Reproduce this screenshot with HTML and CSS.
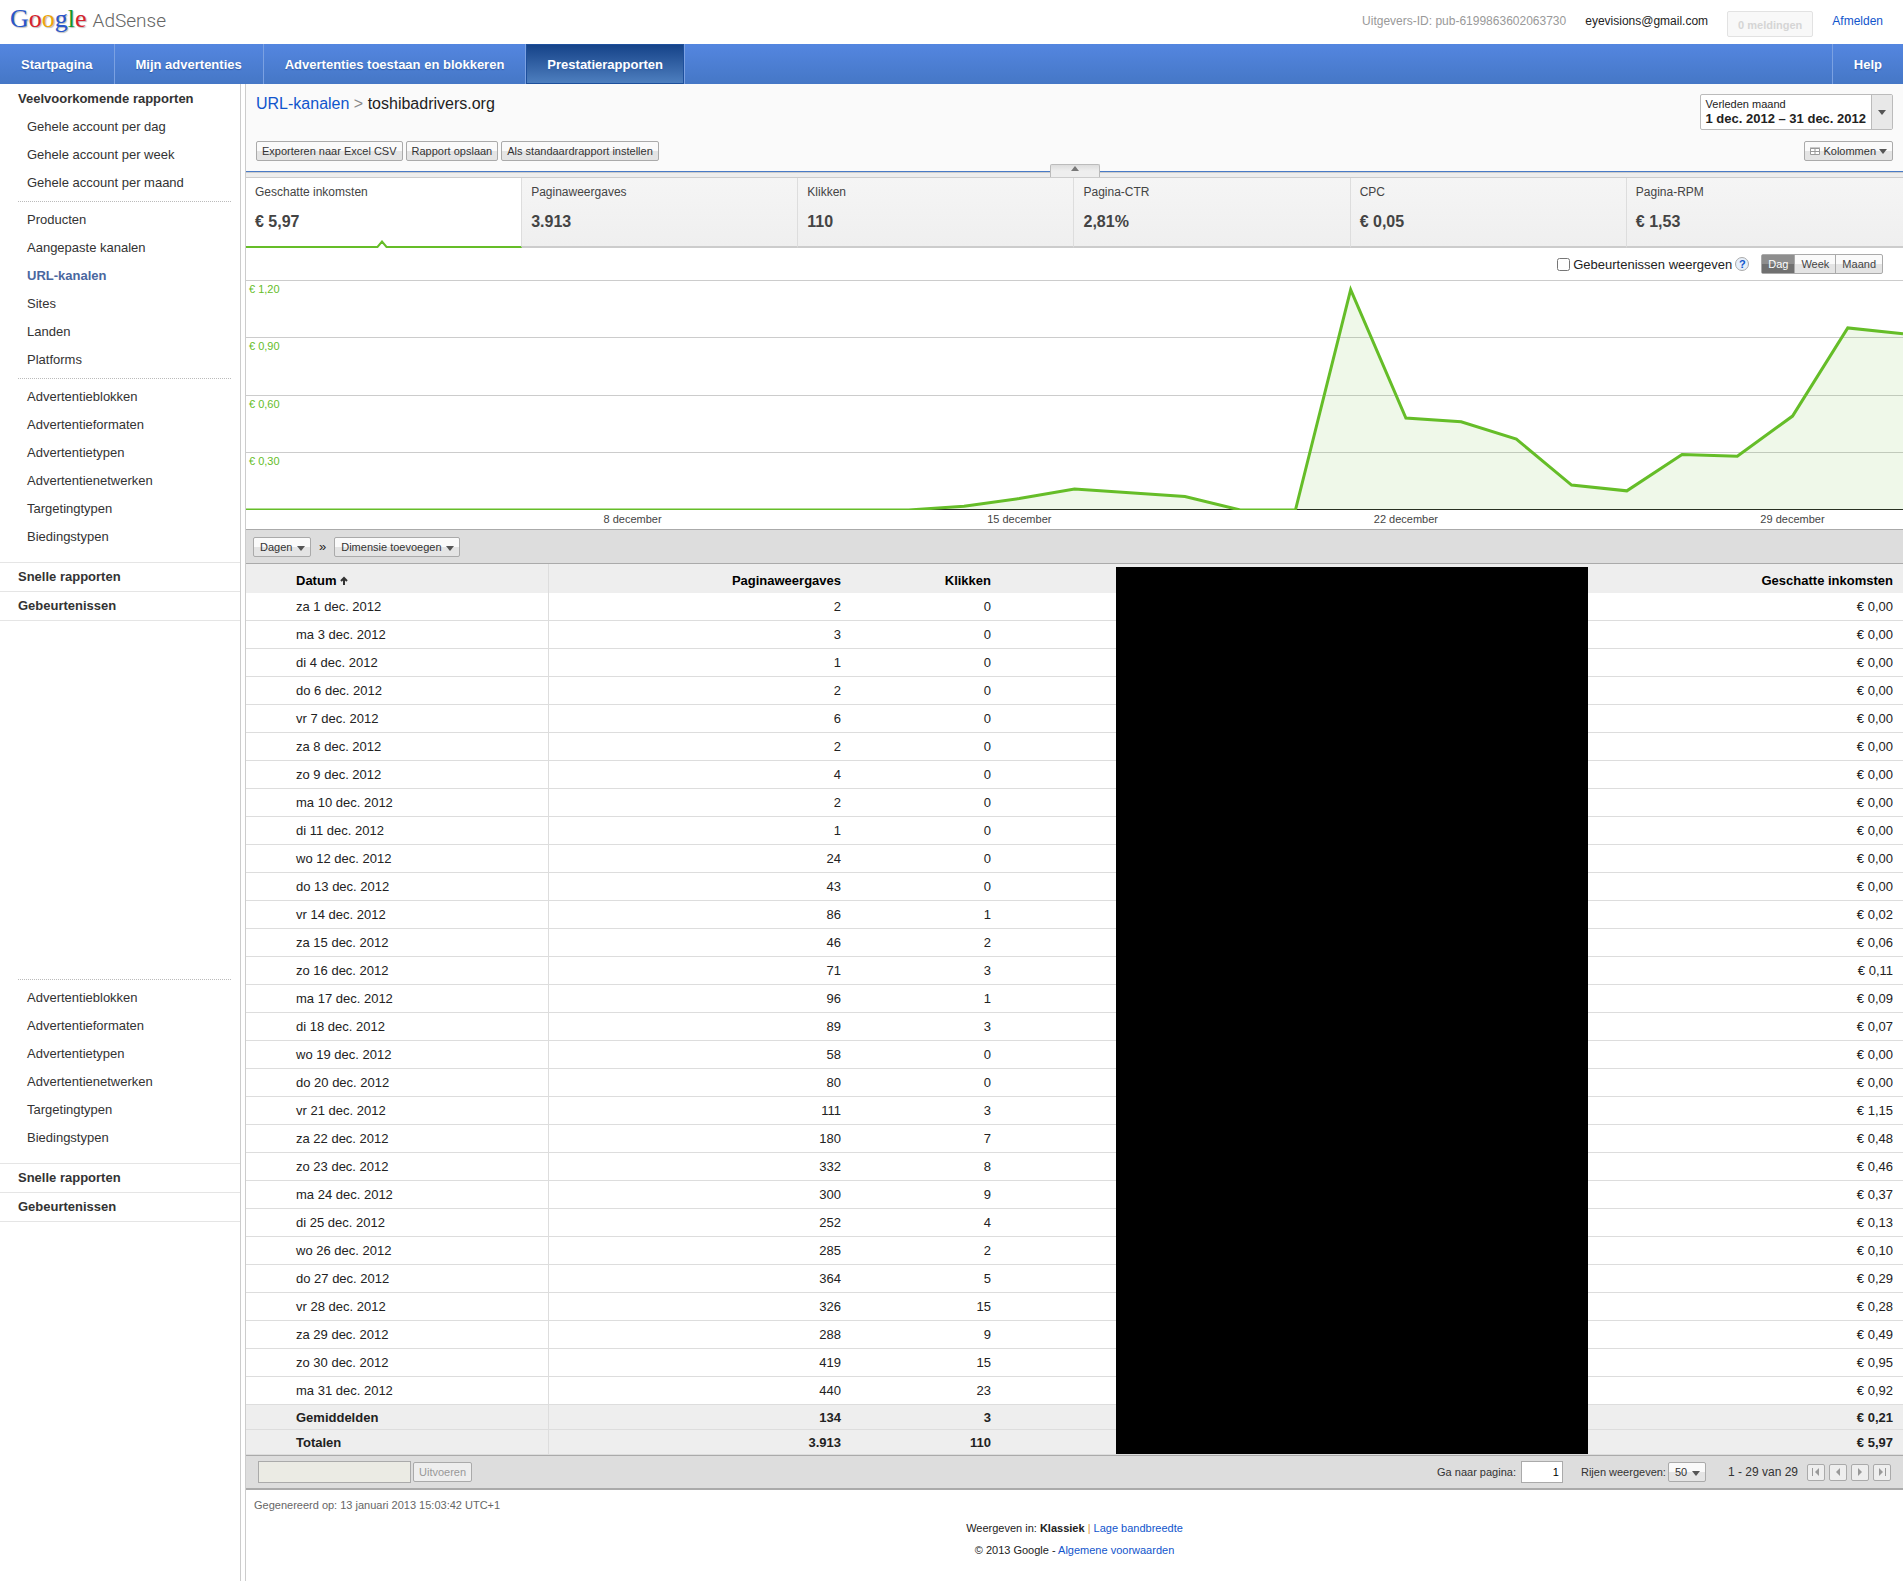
FILE: index.html
```html
<!DOCTYPE html>
<html lang="nl">

<head>
    <meta charset="UTF-8">
    <meta name="viewport" content="width=device-width, initial-scale=1.0">
    <title>Google AdSense - Prestatierapporten</title>
    <link rel="stylesheet" href="styles.css">
</head>

<body>
    <header class="topbar">
        <a href="#" class="logo">
            <span class="google"><span class="blue">G</span><span class="red">o</span><span class="yellow">o</span><span class="blue">g</span><span class="green">l</span><span class="red">e</span></span>
            <span class="adsense">AdSense</span>
        </a>
        <div class="account">
            <span class="publisher">Uitgevers-ID: pub-6199863602063730</span>
            <span>eyevisions@gmail.com</span>
            <button type="button" class="alerts" disabled>0 meldingen</button>
            <a href="#">Afmelden</a>
        </div>
    </header>

    <nav class="tabs">
        <a href="#">Startpagina</a>
        <a href="#">Mijn advertenties</a>
        <a href="#">Advertenties toestaan en blokkeren</a>
        <a href="#" class="active">Prestatierapporten</a>
        <a href="#" class="help">Help</a>
    </nav>

    <div class="layout">
        <aside class="sidebar">
            <h2>Veelvoorkomende rapporten</h2>
            <ul>
                <li><a href="#">Gehele account per dag</a></li>
                <li><a href="#">Gehele account per week</a></li>
                <li><a href="#">Gehele account per maand</a></li>
            </ul>
            <ul class="divided">
                <li><a href="#">Producten</a></li>
                <li><a href="#">Aangepaste kanalen</a></li>
                <li><a href="#" class="current">URL-kanalen</a></li>
                <li><a href="#">Sites</a></li>
                <li><a href="#">Landen</a></li>
                <li><a href="#">Platforms</a></li>
            </ul>
            <ul class="divided">
                <li><a href="#">Advertentieblokken</a></li>
                <li><a href="#">Advertentieformaten</a></li>
                <li><a href="#">Advertentietypen</a></li>
                <li><a href="#">Advertentienetwerken</a></li>
                <li><a href="#">Targetingtypen</a></li>
                <li><a href="#">Biedingstypen</a></li>
            </ul>
            <div class="sections">
                <a href="#">Snelle rapporten</a>
                <a href="#">Gebeurtenissen</a>
            </div>

            <ul class="divided repeat">
                <li><a href="#">Advertentieblokken</a></li>
                <li><a href="#">Advertentieformaten</a></li>
                <li><a href="#">Advertentietypen</a></li>
                <li><a href="#">Advertentienetwerken</a></li>
                <li><a href="#">Targetingtypen</a></li>
                <li><a href="#">Biedingstypen</a></li>
            </ul>
            <div class="sections">
                <a href="#">Snelle rapporten</a>
                <a href="#">Gebeurtenissen</a>
            </div>
        </aside>

        <main class="main">
            <div class="report-head">
                <div class="head-row">
                    <h1><a href="#">URL-kanalen</a> <span class="sep">&gt;</span> toshibadrivers.org</h1>
                    <button type="button" class="daterange">
                        <span class="range-text">Verleden maand<strong>1 dec. 2012 – 31 dec. 2012</strong></span>
                        <span class="range-arrow"><span class="caret"></span></span>
                    </button>
                </div>
                <div class="head-row">
                    <div class="actions">
                        <button type="button" class="btn">Exporteren naar Excel CSV</button>
                        <button type="button" class="btn">Rapport opslaan</button>
                        <button type="button" class="btn">Als standaardrapport instellen</button>
                    </div>
                    <button type="button" class="btn columns">
                        <svg width="10" height="8" viewBox="0 0 10 8" fill="#fff" stroke="#999"><path d="M.5 1.500h9v6h-9zM.5 4.500h9M5 1v6"/><path d="M0 1h10"/></svg>
                        Kolommen
                        <span class="caret"></span>
                    </button>
                </div>
            </div>

            <div class="collapse">
                <button type="button" class="collapse-tab" aria-label="Grafiek verbergen">
                    <svg width="8" height="5" viewBox="0 0 8 5"><path d="M4 0L8 5H0z" fill="#777"/></svg>
                </button>
            </div>

            <div class="metrics">
                <button type="button" class="metric selected">
                    Geschatte inkomsten<strong>€ 5,97</strong>
                    <svg class="notch" width="12" height="8" viewBox="0 0 12 8"><path d="M1 7L6 1.500L11 7V8H1z" fill="#fff"/><path d="M0 7H1.500L6 1.500L10.500 7H12" fill="none" stroke="#65bd28" stroke-width="2"/></svg>
                </button>
                <button type="button" class="metric">Paginaweergaves<strong>3.913</strong></button>
                <button type="button" class="metric">Klikken<strong>110</strong></button>
                <button type="button" class="metric">Pagina-CTR<strong>2,81%</strong></button>
                <button type="button" class="metric">CPC<strong>€ 0,05</strong></button>
                <button type="button" class="metric">Pagina-RPM<strong>€ 1,53</strong></button>
            </div>

            <div class="chart-tools">
                <input type="checkbox" id="events">
                <label for="events">Gebeurtenissen weergeven</label>
                <a href="#" class="question" aria-label="Uitleg">?</a>
                <div class="segmented">
                    <button type="button" class="on">Dag</button>
                    <button type="button">Week</button>
                    <button type="button">Maand</button>
                </div>
            </div>

            <div class="chart">
                <div class="gridline">€ 1,20</div>
                <div class="gridline">€ 0,90</div>
                <div class="gridline">€ 0,60</div>
                <div class="gridline">€ 0,30</div>
                <!-- one unit wide per day, one unit high per eurocent -->
                <svg class="plot" viewBox="0 0 30 120" preserveAspectRatio="none">
                    <path class="area" d="M0 120H12L13 118L14 114L15 109L16 111L17 113L18 120H19L20 5L21 72L22 74L23 83L24 107L25 110L26 91L27 92L28 71L29 25L30 28V120z"/>
                    <path class="line" d="M0 120H12L13 118L14 114L15 109L16 111L17 113L18 120H19L20 5L21 72L22 74L23 83L24 107L25 110L26 91L27 92L28 71L29 25L30 28"/>
                </svg>
            </div>
            <div class="axis">
                <span style="left: 23.33%">8 december</span>
                <span style="left: 46.67%">15 december</span>
                <span style="left: 70%">22 december</span>
                <span style="left: 93.33%">29 december</span>
            </div>

            <div class="dimensions">
                <span class="dropdown">
                    <select aria-label="Dimensie">
                        <option>Dagen</option>
                    </select>
                    <span class="caret"></span>
                </span>
                <span class="raquo">»</span>
                <span class="dropdown">
                    <select aria-label="Dimensie toevoegen">
                        <option>Dimensie toevoegen</option>
                    </select>
                    <span class="caret"></span>
                </span>
            </div>

            <div class="table-wrap">
                <table class="report">
                    <colgroup>
                        <col class="col-date">
                        <col class="col-views">
                        <col class="col-clicks">
                        <col>
                        <col class="col-income">
                    </colgroup>
                    <thead>
                        <tr>
                            <th>Datum <svg width="8" height="9" viewBox="0 0 8 9" fill="none" stroke="#333" stroke-width="2"><path d="M4 9V2M1 5L4 2L7 5"/></svg></th>
                            <th>Paginaweergaves</th>
                            <th>Klikken</th>
                            <td></td>
                            <th>Geschatte inkomsten</th>
                        </tr>
                    </thead>
                    <tbody>
                        <tr><td>za 1 dec. 2012</td><td>2</td><td>0</td><td></td><td>€ 0,00</td></tr>
                        <tr><td>ma 3 dec. 2012</td><td>3</td><td>0</td><td></td><td>€ 0,00</td></tr>
                        <tr><td>di 4 dec. 2012</td><td>1</td><td>0</td><td></td><td>€ 0,00</td></tr>
                        <tr><td>do 6 dec. 2012</td><td>2</td><td>0</td><td></td><td>€ 0,00</td></tr>
                        <tr><td>vr 7 dec. 2012</td><td>6</td><td>0</td><td></td><td>€ 0,00</td></tr>
                        <tr><td>za 8 dec. 2012</td><td>2</td><td>0</td><td></td><td>€ 0,00</td></tr>
                        <tr><td>zo 9 dec. 2012</td><td>4</td><td>0</td><td></td><td>€ 0,00</td></tr>
                        <tr><td>ma 10 dec. 2012</td><td>2</td><td>0</td><td></td><td>€ 0,00</td></tr>
                        <tr><td>di 11 dec. 2012</td><td>1</td><td>0</td><td></td><td>€ 0,00</td></tr>
                        <tr><td>wo 12 dec. 2012</td><td>24</td><td>0</td><td></td><td>€ 0,00</td></tr>
                        <tr><td>do 13 dec. 2012</td><td>43</td><td>0</td><td></td><td>€ 0,00</td></tr>
                        <tr><td>vr 14 dec. 2012</td><td>86</td><td>1</td><td></td><td>€ 0,02</td></tr>
                        <tr><td>za 15 dec. 2012</td><td>46</td><td>2</td><td></td><td>€ 0,06</td></tr>
                        <tr><td>zo 16 dec. 2012</td><td>71</td><td>3</td><td></td><td>€ 0,11</td></tr>
                        <tr><td>ma 17 dec. 2012</td><td>96</td><td>1</td><td></td><td>€ 0,09</td></tr>
                        <tr><td>di 18 dec. 2012</td><td>89</td><td>3</td><td></td><td>€ 0,07</td></tr>
                        <tr><td>wo 19 dec. 2012</td><td>58</td><td>0</td><td></td><td>€ 0,00</td></tr>
                        <tr><td>do 20 dec. 2012</td><td>80</td><td>0</td><td></td><td>€ 0,00</td></tr>
                        <tr><td>vr 21 dec. 2012</td><td>111</td><td>3</td><td></td><td>€ 1,15</td></tr>
                        <tr><td>za 22 dec. 2012</td><td>180</td><td>7</td><td></td><td>€ 0,48</td></tr>
                        <tr><td>zo 23 dec. 2012</td><td>332</td><td>8</td><td></td><td>€ 0,46</td></tr>
                        <tr><td>ma 24 dec. 2012</td><td>300</td><td>9</td><td></td><td>€ 0,37</td></tr>
                        <tr><td>di 25 dec. 2012</td><td>252</td><td>4</td><td></td><td>€ 0,13</td></tr>
                        <tr><td>wo 26 dec. 2012</td><td>285</td><td>2</td><td></td><td>€ 0,10</td></tr>
                        <tr><td>do 27 dec. 2012</td><td>364</td><td>5</td><td></td><td>€ 0,29</td></tr>
                        <tr><td>vr 28 dec. 2012</td><td>326</td><td>15</td><td></td><td>€ 0,28</td></tr>
                        <tr><td>za 29 dec. 2012</td><td>288</td><td>9</td><td></td><td>€ 0,49</td></tr>
                        <tr><td>zo 30 dec. 2012</td><td>419</td><td>15</td><td></td><td>€ 0,95</td></tr>
                        <tr><td>ma 31 dec. 2012</td><td>440</td><td>23</td><td></td><td>€ 0,92</td></tr>
                    </tbody>
                    <tfoot>
                        <tr><th>Gemiddelden</th><td>134</td><td>3</td><td></td><td>€ 0,21</td></tr>
                        <tr><th>Totalen</th><td>3.913</td><td>110</td><td></td><td>€ 5,97</td></tr>
                    </tfoot>
                </table>
                <div class="redacted"></div>
            </div>

            <div class="pager">
                <div class="filter">
                    <input type="text" class="field" aria-label="Filter" disabled>
                    <button type="button" class="btn" disabled>Uitvoeren</button>
                </div>
                <label for="page">Ga naar pagina:</label>
                <input type="text" id="page" class="field page-field" value="1">
                <label for="rows" class="rows-label">Rijen weergeven:</label>
                <span class="dropdown">
                    <select id="rows">
                        <option>50</option>
                    </select>
                    <span class="caret"></span>
                </span>
                <span class="count">1 - 29 van 29</span>
                <div class="steps">
                    <button type="button" aria-label="Eerste pagina" disabled><svg width="8" height="8" viewBox="0 0 8 8"><path d="M0 0h1v8H0zM7 0v8L3 4z"/></svg></button>
                    <button type="button" aria-label="Vorige pagina" disabled><svg width="8" height="8" viewBox="0 0 8 8"><path d="M6 0v8L2 4z"/></svg></button>
                    <button type="button" aria-label="Volgende pagina" disabled><svg width="8" height="8" viewBox="0 0 8 8"><path d="M2 0v8L6 4z"/></svg></button>
                    <button type="button" aria-label="Laatste pagina" disabled><svg width="8" height="8" viewBox="0 0 8 8"><path d="M1 0v8L5 4zM7 0h1v8H7z"/></svg></button>
                </div>
            </div>

            <p class="generated">Gegenereerd op: 13 januari 2013 15:03:42 UTC+1</p>

            <footer class="footer">
                <p>Weergeven in: <strong>Klassiek</strong> <span class="bar">|</span> <a href="#">Lage bandbreedte</a></p>
                <p>© 2013 Google - <a href="#">Algemene voorwaarden</a></p>
            </footer>
        </main>
    </div>
</body>

</html>
```
FILE: styles.css
```css
* {
    box-sizing: border-box;
}

body {
    margin: 0;
    min-height: 100vh;
    display: flex;
    flex-direction: column;
    font-family: Arial, "Liberation Sans", sans-serif;
    font-size: 13px;
    color: #222;
    background: #fff;
}

a {
    color: #15c;
    text-decoration: none;
}

button, input, select {
    font-family: inherit;
    margin: 0;
}

h1, h2, p, ul {
    margin: 0;
    padding: 0;
}

ul {
    list-style: none;
}

/* top bar */

.topbar {
    height: 44px;
    padding: 0 20px 0 10px;
    display: flex;
    justify-content: space-between;
    align-items: flex-start;
}

.logo {
    display: flex;
    align-items: baseline;
    gap: 6px;
    line-height: 38px;
}

.google {
    font-family: "Liberation Serif", serif;
    font-size: 26px;
    text-shadow: 1px 1px 1px #bbb;
}

.adsense {
    font-family: Roboto, sans-serif;
    font-weight: 300;
    font-size: 19px;
    color: #666;
}

.blue { color: #2a56c9; }
.red { color: #d6232e; }
.yellow { color: #eda50c; }
.green { color: #12962b; }

.account {
    display: flex;
    gap: 19px;
    font-size: 12px;
    line-height: 43px;
}

.publisher {
    color: #999;
}

.alerts {
    height: 26px;
    margin-top: 11px;
    padding: 2px 10px 0;
    font-size: 11px;
    font-weight: bold;
    color: #d5d5d5;
    background: #f8f8f8;
    border: 1px solid #e2e2e2;
    border-radius: 2px;
}

/* navigation */

.tabs {
    height: 40px;
    display: flex;
    background: linear-gradient(#5486e0, #4577c6);
}

.tabs a {
    padding: 0 21px;
    line-height: 41px;
    font-weight: bold;
    color: #fff;
    border-right: 1px solid #7ba1e2;
    text-shadow: 0 1px 1px #2f5ba8;
}

.tabs .active {
    background: linear-gradient(#144187, #4f80c0);
    box-shadow: inset 0 0 0 1px #1d4f9c;
}

.tabs .help {
    margin-left: auto;
    border-right: 0;
    border-left: 1px solid #7ba1e2;
}

.layout {
    flex: 1;
    display: flex;
}

/* sidebar */

.sidebar {
    width: 246px;
    flex-shrink: 0;
    padding: 1px 5px 0 0;
    border-right: 1px solid #ccc;
    background: linear-gradient(#ccc, #ccc) 240px 0 / 1px 100% no-repeat;
}

.sidebar h2 {
    padding-left: 18px;
    font-size: 13px;
    line-height: 28px;
    color: #333;
}

.sidebar li a {
    display: block;
    padding-left: 27px;
    line-height: 28px;
    color: #333;
}

.sidebar ul {
    padding-bottom: 4px;
}

.sidebar .divided {
    position: relative;
    padding-top: 5px;
    margin-right: 9px;
}

.sidebar .divided::before {
    content: "";
    position: absolute;
    top: 0;
    left: 18px;
    right: 0;
    border-top: 1px dotted #bbb;
}

.sidebar .current {
    font-weight: bold;
    color: #4a67a0;
}

.sections {
    margin-top: 7px;
    border-top: 1px solid #e5e5e5;
}

.sections a {
    display: block;
    padding-left: 18px;
    line-height: 28px;
    font-weight: bold;
    color: #333;
    border-bottom: 1px solid #e5e5e5;
}

.sidebar .repeat {
    margin-top: 358px;
}

/* shared controls */

.btn, .dropdown, .segmented {
    height: 20px;
    font-size: 11px;
    color: #333;
    border: 1px solid #aaa;
    border-radius: 2px;
    background: linear-gradient(#fafafa 50%, #e4e4e4 50%);
}

.btn {
    padding: 0 5px;
}

.btn:disabled {
    color: #999;
    background: #eee;
}

.caret {
    width: 0;
    height: 0;
    border: 4px solid transparent;
    border-top: 5px solid #555;
    border-bottom: 0;
}

.dropdown {
    position: relative;
    display: inline-flex;
}

.dropdown select {
    appearance: none;
    padding: 0 17px 0 6px;
    font-size: 11px;
    color: #333;
    border: 0;
    background: none;
}

.dropdown .caret {
    position: absolute;
    right: 5px;
    top: 8px;
    pointer-events: none;
}

/* report header */

.main {
    flex: 1;
    min-width: 0;
}

.report-head {
    height: 87px;
    padding: 10px 10px 0;
    background: #fafafa;
}

.head-row {
    display: flex;
    justify-content: space-between;
    align-items: flex-start;
}

.head-row + .head-row {
    margin-top: 11px;
}

h1 {
    font-size: 16px;
    font-weight: normal;
    line-height: 19px;
}

.sep {
    color: #888;
}

.daterange {
    height: 36px;
    padding: 0;
    display: flex;
    text-align: left;
    font-size: 11px;
    color: #222;
    background: #fff;
    border: 1px solid #bbb;
    border-radius: 2px;
}

.range-text {
    padding: 2px 5px 0;
    line-height: 14px;
}

.range-text strong {
    display: block;
    font-size: 13px;
    line-height: 16px;
}

.range-arrow {
    width: 21px;
    align-self: stretch;
    display: flex;
    align-items: center;
    justify-content: center;
    background: #e8e8e8;
    border-left: 1px solid #bbb;
}

.actions {
    display: flex;
    gap: 3px;
}

.columns {
    display: flex;
    align-items: center;
    gap: 3px;
}

.collapse {
    height: 6px;
    display: flex;
    justify-content: center;
    align-items: flex-end;
    border-top: 1px solid #4a7bc6;
    background: linear-gradient(#ccc 1px, #eee 1px);
}

.collapse-tab {
    width: 50px;
    height: 13px;
    padding: 0 0 5px;
    display: flex;
    align-items: center;
    justify-content: center;
    border: 1px solid #bbb;
    border-bottom: 0;
    border-radius: 2px 2px 0 0;
    background: linear-gradient(#ddd, #eee 6px);
}

/* metric cards */

.metrics {
    display: grid;
    grid-template-columns: repeat(6, 1fr);
    border-top: 1px solid #ccc;
}

.metric {
    position: relative;
    height: 70px;
    padding: 6px 9px 0;
    text-align: left;
    font-size: 12px;
    line-height: 16px;
    color: #444;
    border: 0;
    border-right: 1px solid #ddd;
    border-bottom: 2px solid #ccc;
    background: linear-gradient(#f5f5f5, #efefef);
    display: flex;
    flex-direction: column;
}

.metric:last-child {
    border-right: 0;
}

.metric strong {
    margin-top: 12px;
    font-size: 16px;
    line-height: 20px;
}

.metric.selected {
    background: #fff;
    border-bottom-color: #65bd28;
}

.notch {
    position: absolute;
    left: 50%;
    bottom: -2px;
    margin-left: -8px;
}

/* chart */

.chart-tools {
    height: 32px;
    padding-right: 20px;
    display: flex;
    justify-content: flex-end;
    align-items: center;
}

.chart-tools input {
    margin-right: 3px;
}

.question {
    width: 14px;
    height: 14px;
    margin: 0 12px 0 3px;
    text-align: center;
    font-size: 11px;
    font-weight: bold;
    line-height: 13px;
    border: 1px solid #aaa;
    border-radius: 50%;
    background: #e6effa;
}

.segmented {
    display: flex;
}

.segmented button {
    padding: 0 6px;
    font-size: 11px;
    color: #444;
    border: 0;
    background: none;
}

.segmented button + button {
    border-left: 1px solid #aaa;
}

.segmented .on {
    color: #fff;
    background: linear-gradient(#8e8e8e 50%, #707070 50%);
}

.chart {
    position: relative;
    height: 230px;
    display: grid;
    grid-template-rows: repeat(4, 1fr);
    border-bottom: 1px solid #222;
}

.gridline {
    padding: 2px 3px;
    font-size: 11px;
    color: #65bd28;
    border-top: 1px solid #ccc;
}

.plot {
    position: absolute;
    top: 0;
    left: 0;
    width: 100%;
    height: 230px;
}

.area {
    fill: #65bd28;
    fill-opacity: 0.1;
}

.line {
    fill: none;
    stroke: #65bd28;
    stroke-width: 3px;
    vector-effect: non-scaling-stroke;
}

.axis {
    position: relative;
    height: 19px;
    font-size: 11px;
    line-height: 19px;
    color: #444;
}

.axis span {
    position: absolute;
    transform: translateX(-50%);
}

/* report table */

.dimensions {
    height: 35px;
    padding: 0 7px;
    display: flex;
    align-items: center;
    gap: 8px;
    background: #ddd;
    border-top: 1px solid #aaa;
    border-bottom: 1px solid #aaa;
}

.table-wrap {
    position: relative;
}

.report {
    width: 100%;
    table-layout: fixed;
    border-collapse: separate;
    border-spacing: 0;
}

.col-date { width: 303px; }
.col-views { width: 302px; }
.col-clicks { width: 150px; }
.col-income { width: 313px; }

.report th, .report td {
    height: 28px;
    padding: 0 10px;
    text-align: right;
    border-bottom: 1px solid #ddd;
}

.report th:first-child, .report td:first-child {
    padding-left: 50px;
    text-align: left;
    border-right: 1px solid #ddd;
}

.report thead th, .report thead td {
    height: 29px;
    padding-top: 3px;
    color: #000;
    background: #eee;
    border-bottom: 0;
}

.report tfoot th, .report tfoot td {
    height: 25px;
    font-weight: bold;
    background: #eee;
}

.redacted {
    position: absolute;
    top: 3px;
    bottom: 1px;
    left: 870px;
    right: 315px;
    background: #000;
}

/* pager */

.pager {
    height: 35px;
    padding: 0 12px;
    display: flex;
    align-items: center;
    font-size: 11px;
    color: #333;
    background: #ddd;
    border-top: 1px solid #aaa;
    border-bottom: 2px solid #aaa;
}

.filter {
    display: flex;
    align-items: center;
    gap: 2px;
    margin-right: auto;
}

.field {
    width: 153px;
    height: 22px;
    padding: 0 3px;
    font-size: 11px;
    border: 1px solid #aaa;
    background: #fff;
}

.field:disabled {
    background: #ebebe4;
}

.page-field {
    width: 42px;
    margin-left: 5px;
    text-align: right;
}

.rows-label {
    margin: 0 2px 0 18px;
}

.count {
    margin: 0 9px 0 22px;
    font-size: 12px;
}

.steps {
    display: flex;
    gap: 4px;
}

.steps button {
    width: 18px;
    height: 17px;
    padding: 0;
    display: flex;
    align-items: center;
    justify-content: center;
    border: 1px solid #aaa;
    border-radius: 2px;
    background: #eee;
}

.steps path {
    fill: #999;
}

.generated {
    padding: 0 8px;
    font-size: 11px;
    line-height: 31px;
    color: #666;
}

.footer {
    margin-top: -4px;
    text-align: center;
    font-size: 11px;
    line-height: 22px;
}

.bar {
    color: #e09a40;
}
```
